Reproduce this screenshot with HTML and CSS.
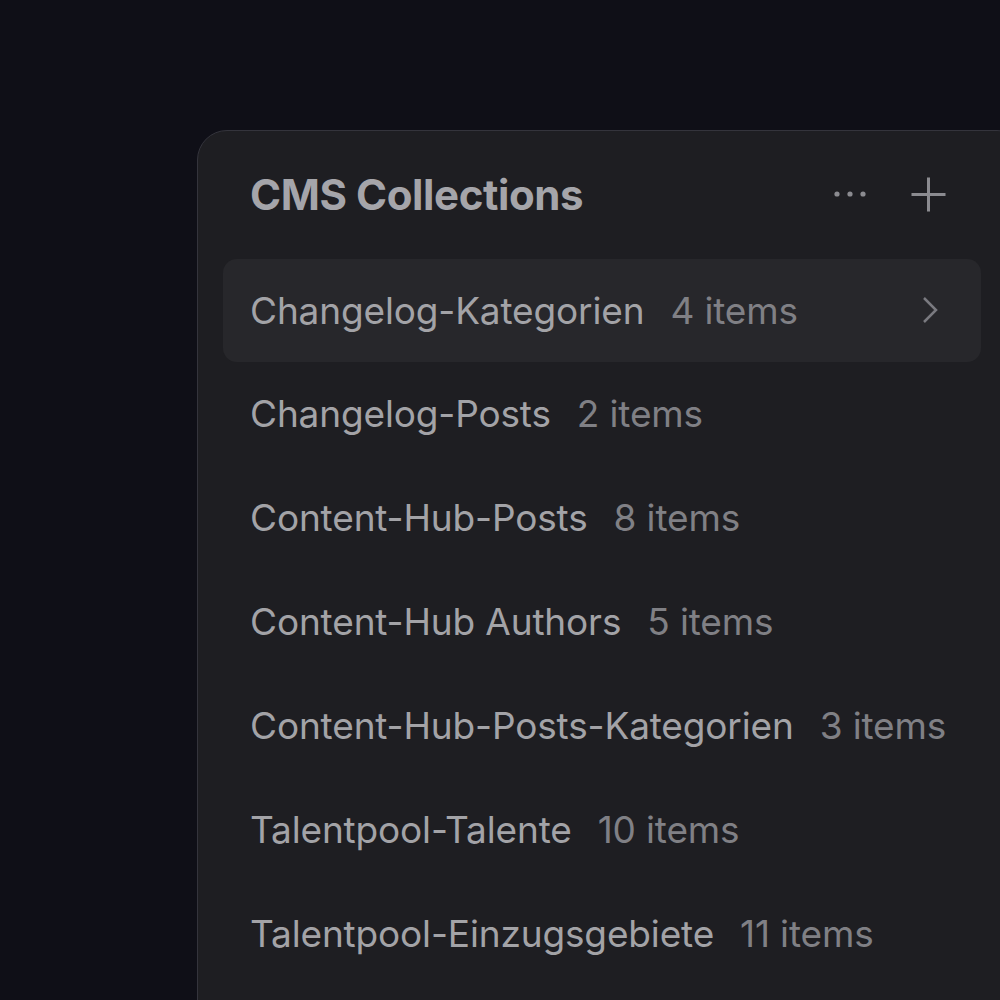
FILE: index.html
```html
<!DOCTYPE html>
<html lang="en">
<head>
    <meta charset="UTF-8">
    <title>CMS Collections</title>
    <link rel="stylesheet" href="styles.css">
</head>
<body>
    <div class="panel">
        <div class="panel-header">
            <h2 class="panel-title">CMS Collections</h2>
            <div class="header-actions">
                <button class="icon-btn" aria-label="More">
                    <svg width="36" height="10" viewBox="0 0 36 10"><circle cx="5" cy="5" r="2.6" fill="#8b8b90"/><circle cx="18" cy="5" r="2.6" fill="#8b8b90"/><circle cx="31" cy="5" r="2.6" fill="#8b8b90"/></svg>
                </button>
                <button class="icon-btn" aria-label="Add">
                    <svg width="37" height="37" viewBox="0 0 37 37"><path d="M18.5 1.5v34M1.5 18.5h34" stroke="#8b8b90" stroke-width="3" fill="none"/></svg>
                </button>
            </div>
        </div>
        <ul class="collection-list">
            <li class="collection-item active">
                <span class="item-name">Changelog-Kategorien</span>
                <span class="item-count">4 items</span>
                <svg class="chevron" width="20" height="30" viewBox="0 0 20 30"><path d="M4 3l12 12-12 12" stroke="#7a7a80" stroke-width="2.5" fill="none"/></svg>
            </li>
            <li class="collection-item">
                <span class="item-name">Changelog-Posts</span>
                <span class="item-count">2 items</span>
            </li>
            <li class="collection-item">
                <span class="item-name">Content-Hub-Posts</span>
                <span class="item-count">8 items</span>
            </li>
            <li class="collection-item">
                <span class="item-name">Content-Hub Authors</span>
                <span class="item-count">5 items</span>
            </li>
            <li class="collection-item">
                <span class="item-name">Content-Hub-Posts-Kategorien</span>
                <span class="item-count">3 items</span>
            </li>
            <li class="collection-item">
                <span class="item-name">Talentpool-Talente</span>
                <span class="item-count">10 items</span>
            </li>
            <li class="collection-item">
                <span class="item-name">Talentpool-Einzugsgebiete</span>
                <span class="item-count">11 items</span>
            </li>
        </ul>
    </div>
</body>
</html>
```
FILE: styles.css
```css
html, body {
    margin: 0;
    height: 100%;
    overflow: hidden;
}
body {
    background-color: #0f0f17;
    font-family: Inter, "Noto Sans", sans-serif;
    padding: 130px 0 0 197px;
    box-sizing: border-box;
}
.panel {
    width: 830px;
    height: 900px;
    background-color: #1e1e22;
    border: 1px solid #34343c;
    border-radius: 30px;
    box-sizing: border-box;
}
.panel-header {
    display: flex;
    align-items: center;
    justify-content: space-between;
    padding: 34px 79px 0 52px;
    height: 92px;
    box-sizing: border-box;
}
.panel-title {
    margin: 0;
    font-size: 42px;
    font-weight: 700;
    color: #a5a5aa;
    letter-spacing: -0.4px;
}
.header-actions {
    display: flex;
    align-items: center;
    gap: 42px;
}
.icon-btn {
    background: none;
    border: none;
    padding: 0;
    display: flex;
    align-items: center;
}
.collection-list {
    list-style: none;
    margin: 36px 0 0 25px;
    padding: 0;
    width: 758px;
}
.collection-item {
    display: flex;
    align-items: center;
    height: 104px;
    padding: 0 41px 1px 27px;
    box-sizing: border-box;
    border-radius: 14px;
    font-size: 37px;
    letter-spacing: -0.15px;
    white-space: nowrap;
}
.collection-item.active {
    background-color: #27272b;
    height: 103px;
    margin-top: 1px;
}
.item-name {
    color: #a3a3a7;
}
.item-count {
    color: #808085;
    margin-left: 26px;
}
.chevron {
    margin-left: auto;
}
```
